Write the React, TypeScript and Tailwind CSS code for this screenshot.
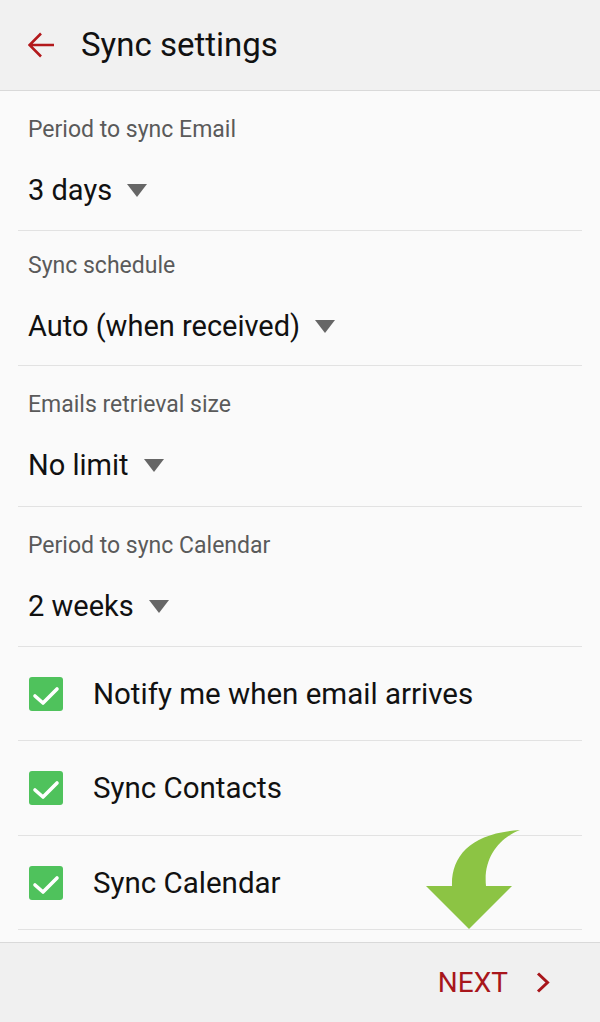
import React from "react";

const Tri = () => (
  <svg width="20" height="13" viewBox="0 0 20 13" className="ml-[15px] shrink-0">
    <polygon points="0,0 20,0 10,13" fill="#666666" />
  </svg>
);

const Check = () => (
  <div className="w-[34px] h-[34px] rounded-[3px] bg-[#4fc25c] flex items-center justify-center shrink-0">
    <svg width="34" height="34" viewBox="0 0 34 34">
      <polyline points="6,19 14,26 28,12" fill="none" stroke="#ffffff" strokeWidth="3.6" strokeLinecap="round" strokeLinejoin="round" />
    </svg>
  </div>
);

function Section({ label, value, h, pt }: { label: string; value: string; h: string; pt: string }) {
  return (
    <div className={`mx-[18px] border-b border-[#e2e2e2] pl-[10px] flex flex-col ${h} ${pt}`}>
      <div className="text-[23px] leading-[24px] text-[#5a5a5a]">{label}</div>
      <div className="mt-[32px] flex items-center h-[32px]">
        <span className="text-[29px] leading-[32px] text-[#111111]">{value}</span>
        <Tri />
      </div>
    </div>
  );
}

function CheckRow({ label, h }: { label: string; h: string }) {
  return (
    <div className={`mx-[18px] border-b border-[#e2e2e2] pl-[11px] flex items-center ${h}`}>
      <Check />
      <span className="ml-[30px] text-[29.5px] leading-[32px] text-[#111111]">{label}</span>
    </div>
  );
}

export default function App() {
  return (
    <div
      className="w-[600px] h-[1022px] flex flex-col bg-[#fafafa] relative overflow-hidden"
      style={{ fontFamily: "Roboto, 'Noto Sans', sans-serif" }}
    >
      <header className="h-[91px] shrink-0 bg-[#f1f1f1] border-b border-[#d9d9d9] flex items-center pl-[28px]">
        <svg width="26" height="26" viewBox="0 0 26 26" className="shrink-0">
          <path d="M26 13 H2 M13 1.5 L1.5 13 L13 24.5" fill="none" stroke="#b3191c" strokeWidth="2.6" />
        </svg>
        <h1 className="ml-[27px] text-[33px] leading-[40px] text-[#111111] font-normal">Sync settings</h1>
      </header>

      <main className="flex-1 flex flex-col">
        <Section label="Period to sync Email" value="3 days" h="h-[140px]" pt="pt-[27px]" />
        <Section label="Sync schedule" value="Auto (when received)" h="h-[135px]" pt="pt-[23px]" />
        <Section label="Emails retrieval size" value="No limit" h="h-[141px]" pt="pt-[27px]" />
        <Section label="Period to sync Calendar" value="2 weeks" h="h-[140px]" pt="pt-[27px]" />
        <CheckRow label="Notify me when email arrives" h="h-[94px]" />
        <CheckRow label="Sync Contacts" h="h-[95px]" />
        <CheckRow label="Sync Calendar" h="h-[94px]" />
      </main>

      <footer className="h-[80px] shrink-0 bg-[#f0f0f0] border-t border-[#d9d9d9] flex items-center justify-end pr-[50px]">
        <span className="text-[28px] leading-[32px] text-[#a8161b]">NEXT</span>
        <svg width="14" height="21" viewBox="0 0 14 21" className="ml-[28px]">
          <polyline points="2,1.5 11.5,10.5 2,19.5" fill="none" stroke="#a8161b" strokeWidth="3" />
        </svg>
      </footer>

      <svg
        width="110"
        height="110"
        viewBox="0 0 110 110"
        className="absolute left-[420px] top-[825px]"
      >
        <path d="M32 61 C31 30 52 8 100 5 C80 13 63 32 66 61 L92 61 L49 104 L6 61 Z" fill="#8cc444" />
      </svg>
    </div>
  );
}
